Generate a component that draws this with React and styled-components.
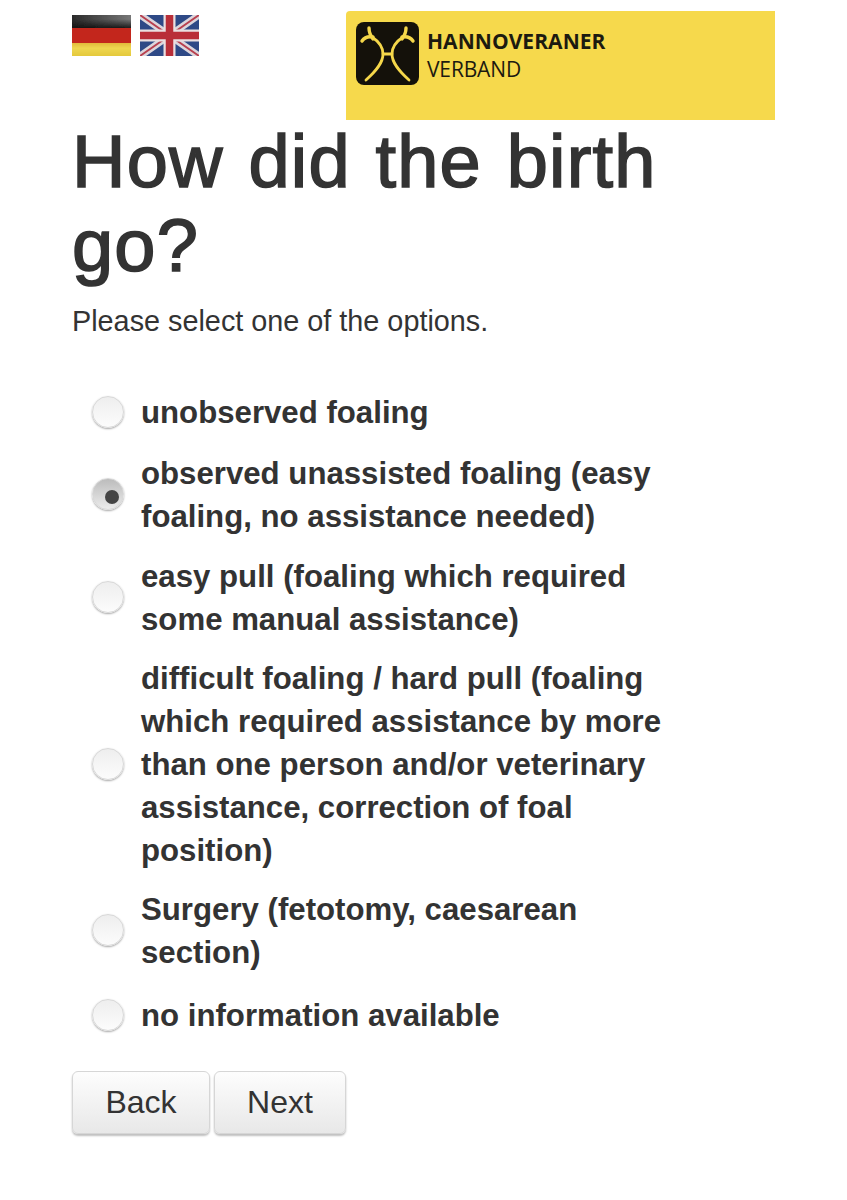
import React from 'react';
import styled, { createGlobalStyle } from 'styled-components';

const options = [
    { label: 'unobserved foaling', top: 0 },
    { label: 'observed unassisted foaling (easy foaling, no assistance needed)', top: 18, checked: true },
    { label: 'easy pull (foaling which required some manual assistance)', top: 17 },
    { label: 'difficult foaling / hard pull (foaling which required assistance by more than one person and/or veterinary assistance, correction of foal position)', top: 16 },
    { label: 'Surgery (fetotomy, caesarean section)', top: 16 },
    { label: 'no information available', top: 20 },
];

const GermanFlag = () => (
    <svg width="59" height="41" viewBox="0 0 59 41">
        <defs>
            <linearGradient id="deBlack" x1="0" y1="0" x2="1" y2="0">
                <stop offset="0" stopColor="#2a2a2a" />
                <stop offset="1" stopColor="#777" />
            </linearGradient>
            <linearGradient id="deFade" x1="0" y1="0" x2="0" y2="1">
                <stop offset="0.3" stopColor="#111" stopOpacity="0" />
                <stop offset="1" stopColor="#111" stopOpacity="1" />
            </linearGradient>
            <linearGradient id="deYellow" x1="0" y1="0" x2="0" y2="1">
                <stop offset="0" stopColor="#e2b93a" />
                <stop offset="0.4" stopColor="#efd650" />
                <stop offset="1" stopColor="#e4c93c" />
            </linearGradient>
            <filter id="deSoft"><feGaussianBlur stdDeviation="0.5" /></filter>
        </defs>
        <g filter="url(#deSoft)">
            <rect width="59" height="14" fill="url(#deBlack)" />
            <rect width="59" height="14" fill="url(#deFade)" />
            <rect y="13" width="59" height="15" fill="#c3261b" />
            <rect y="28" width="59" height="13" fill="url(#deYellow)" />
        </g>
    </svg>
);

const BritishFlag = () => (
    <svg width="59" height="41" viewBox="0 0 59 41">
        <defs>
            <filter id="ukSoft"><feGaussianBlur stdDeviation="0.6" /></filter>
        </defs>
        <g filter="url(#ukSoft)">
            <rect width="59" height="41" fill="#2f4a86" />
            <path d="M0 0L59 41M59 0L0 41" stroke="#dcd6dc" strokeWidth="7" />
            <path d="M0 0L59 41M59 0L0 41" stroke="#b8404f" strokeWidth="2" />
            <path d="M29.5 0V41M0 20.5H59" stroke="#eadfe0" strokeWidth="12" />
            <path d="M29.5 0V41M0 20.5H59" stroke="#b92f38" strokeWidth="7.5" />
        </g>
    </svg>
);

const LogoMark = () => (
    <svg width="63" height="63" viewBox="0 0 63 63">
        <rect width="63" height="63" rx="8" fill="#14110a" />
        <g fill="none" stroke="#f5d74a" strokeWidth="2.8" strokeLinecap="round">
            <path d="M10 58C20 49 27 41 27 32C27 24 22 19 16 15" />
            <path d="M53 58C43 49 36 41 36 32C36 24 41 19 47 15" />
            <path d="M27 32H36" />
            <path d="M17 17C14 13 13 9 13 6" strokeWidth="3.4" />
            <path d="M46 17C49 13 50 9 50 6" strokeWidth="3.4" />
            <path d="M17 15C12 14 8 16 6 19" strokeWidth="3.4" />
            <path d="M46 15C51 14 55 16 57 19" strokeWidth="3.4" />
        </g>
    </svg>
);

const App = () => (
    <Page>
        <GlobalStyle />
        <Header>
            <Flags>
                <GermanFlag />
                <BritishFlag />
            </Flags>
            <Banner>
                <LogoMark />
                <BrandText>
                    <BrandName>HANNOVERANER</BrandName>
                    <BrandSub>VERBAND</BrandSub>
                </BrandText>
            </Banner>
        </Header>
        <Title>How did the birth go?</Title>
        <Lead>Please select one of the options.</Lead>
        <OptionList>
            {options.map((o) => (
                <Option key={o.label} $top={o.top}>
                    <Radio $checked={o.checked} />
                    <OptionLabel>{o.label}</OptionLabel>
                </Option>
            ))}
        </OptionList>
        <Buttons>
            <Button $width={138}>Back</Button>
            <Button $width={132}>Next</Button>
        </Buttons>
    </Page>
);

export default App;

const GlobalStyle = createGlobalStyle`
    body {
        margin: 0;
        background: #fff;
        color: #333;
        font-family: "Liberation Sans", Arial, sans-serif;
    }
`;

const Page = styled.div`
    width: 847px;
    height: 1200px;
    box-sizing: border-box;
    padding: 11px 72px 0;
    overflow: hidden;
`;

const Header = styled.header`
    display: flex;
    align-items: flex-start;
`;

const Flags = styled.div`
    display: flex;
    gap: 9px;
    width: 274px;
    margin-top: 4px;
`;

const Banner = styled.div`
    display: flex;
    gap: 8px;
    width: 429px;
    height: 109px;
    box-sizing: border-box;
    padding: 11px 10px;
    background: #f6d94c;
    border-top-left-radius: 4px;
`;

const BrandText = styled.div`
    display: flex;
    flex-direction: column;
    padding-top: 5px;
    color: #1c1a10;
    font-family: "Open Sans", sans-serif;
`;

const BrandName = styled.span`
    font-size: 21px;
    line-height: 28px;
    font-weight: 700;
    letter-spacing: 0.05px;
`;

const BrandSub = styled.span`
    font-size: 21px;
    line-height: 28px;
    font-weight: 400;
    letter-spacing: -0.15px;
`;

const Title = styled.h1`
    margin: 0;
    width: 640px;
    font-size: 74px;
    line-height: 84px;
    font-weight: 400;
    letter-spacing: 1.2px;
    word-spacing: 3px;
    -webkit-text-stroke: 1.6px #333;
`;

const Lead = styled.p`
    margin: 14px 0 0;
    font-size: 28.8px;
    line-height: 38px;
`;

const OptionList = styled.div`
    display: flex;
    flex-direction: column;
    margin-top: 51px;
`;

const Option = styled.label`
    display: flex;
    align-items: center;
    box-sizing: border-box;
    width: 604px;
    margin-top: ${(p) => p.$top}px;
    padding-left: 20px;
`;

const Radio = styled.span`
    position: relative;
    flex: none;
    width: 32px;
    height: 32px;
    margin: 0 17px 2px 0;
    border-radius: 50%;
    box-sizing: border-box;
    border: 1px solid #d8d8d8;
    background: ${(p) => p.$checked
        ? 'linear-gradient(#bcbcbc, #ececec)'
        : 'linear-gradient(#eeeeee, #fcfcfc)'};
    box-shadow: 0 1px 2px rgba(0, 0, 0, 0.35);

    &::after {
        content: '';
        display: ${(p) => (p.$checked ? 'block' : 'none')};
        position: absolute;
        top: 11px;
        left: 12px;
        width: 14px;
        height: 14px;
        border-radius: 50%;
        background: #444;
    }
`;

const OptionLabel = styled.span`
    font-size: 31.2px;
    line-height: 43px;
    font-weight: 700;
`;

const Buttons = styled.div`
    display: flex;
    gap: 4px;
    margin-top: 34px;
`;

const Button = styled.button`
    width: ${(p) => p.$width}px;
    height: 63px;
    padding: 0;
    border: 1px solid #d6d6d6;
    border-radius: 6px;
    background: linear-gradient(#fdfdfd, #e8e8e8);
    box-shadow: 0 2px 2px rgba(0, 0, 0, 0.25);
    color: #333;
    font-family: inherit;
    font-size: 32px;
`;
